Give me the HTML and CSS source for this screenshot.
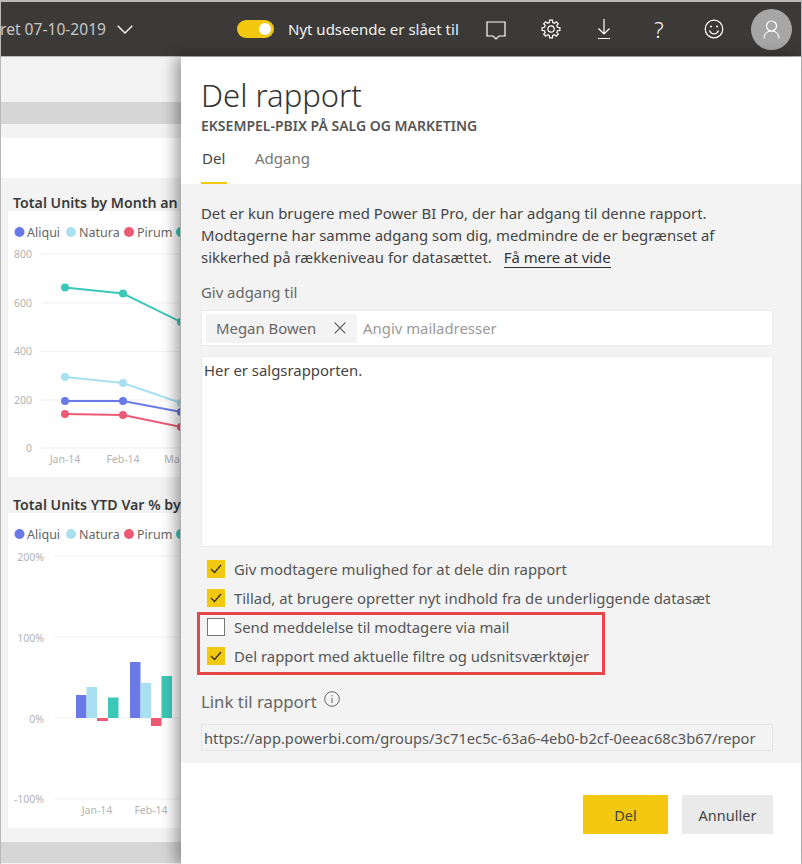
FILE: index.html
```html
<!DOCTYPE html>
<html lang="da">

<head>
    <title>Del rapport</title>
    <meta charset="UTF-8">
    <link rel="stylesheet" href="styles.css">
</head>

<body>
    <header class="topbar">
        <div class="updated">ret 07-10-2019
            <svg class="chevron" width="16" height="9" viewBox="0 0 16 9"><path d="M.7.7 8 8l7.300-7.300"/></svg>
        </div>
        <div class="toggle"><span class="knob"></span></div>
        <span class="toggle-label">Nyt udseende er slået til</span>
        <svg class="icon icon-comment" width="20" height="19" viewBox="0 0 20 19"><path d="M1 1h18v14h-6l-3 3-3-3H1z"/></svg>
        <svg class="icon icon-gear" width="20" height="20" viewBox="0 0 20 20">
            <polygon points="8.27,3.53 8.59,1.11 11.41,1.11 11.73,3.53 13.35,4.2 15.29,2.72 17.28,4.71 15.8,6.65 16.47,8.27 18.89,8.59 18.89,11.41 16.47,11.73 15.8,13.35 17.28,15.29 15.29,17.28 13.35,15.8 11.73,16.47 11.41,18.89 8.59,18.89 8.27,16.47 6.65,15.8 4.71,17.28 2.72,15.29 4.2,13.35 3.53,11.73 1.11,11.41 1.11,8.59 3.53,8.27 4.2,6.65 2.72,4.71 4.71,2.72 6.65,4.2"/>
            <circle cx="10" cy="10" r="3.2"/>
        </svg>
        <svg class="icon icon-download" width="14" height="20" viewBox="0 0 14 20"><path d="M7 0v15M1.500 9.500 7 15l5.500-5.500M1 19.500h12"/></svg>
        <span class="icon-help">?</span>
        <svg class="icon icon-smile" width="20" height="20" viewBox="0 0 20 20">
            <circle cx="10" cy="10" r="8.800"/>
            <path d="M5.500 11.500c1 2.300 2.600 3.400 4.500 3.400s3.500-1.100 4.500-3.400"/>
            <circle class="eye" cx="7" cy="7.500" r="1"/>
            <circle class="eye" cx="13" cy="7.500" r="1"/>
        </svg>
        <div class="avatar">
            <svg class="icon" width="17" height="19" viewBox="0 0 17 19"><circle cx="8.500" cy="6" r="5"/><path d="M1 18.500c0-4.500 3-7.500 7.500-7.500s7.500 3 7.500 7.500"/></svg>
        </div>
    </header>

    <main class="page">
        <div class="dashboard">
            <div class="band-top"></div>
            <div class="band-grey"></div>
            <div class="band-gap"></div>
            <div class="band-white"></div>

            <div class="card card-line">
                <h3 class="card-title">Total Units by Month an</h3>
                <svg class="chart chart-line" width="172" height="266" viewBox="8 211 172 266">
                    <g class="legend">
                        <circle class="blue" cx="19.500" cy="232" r="5"/><text x="27" y="237">Aliqui</text>
                        <circle class="light" cx="71" cy="232" r="5"/><text x="79" y="237">Natura</text>
                        <circle class="red" cx="129" cy="232" r="5"/><text x="137" y="237">Pirum</text>
                        <circle class="teal" cx="181" cy="232" r="5"/>
                    </g>
                    <g class="grid">
                        <path d="M41 254H180M41 303H180M41 351.500H180M41 400H180M41 448H180"/>
                    </g>
                    <g class="axis axis-y">
                        <text x="32" y="258">800</text>
                        <text x="32" y="307">600</text>
                        <text x="32" y="355">400</text>
                        <text x="32" y="404">200</text>
                        <text x="32" y="452">0</text>
                    </g>
                    <g class="axis axis-x">
                        <text x="65" y="463">Jan-14</text>
                        <text x="123" y="463">Feb-14</text>
                        <text x="172" y="463">Ma</text>
                    </g>
                    <polyline class="line teal-line" points="65,287.500 123,293.500 181,322"/>
                    <polyline class="line light-line" points="65,377 123,383 181,403"/>
                    <polyline class="line blue-line" points="65,401 123,401 181,412"/>
                    <polyline class="line red-line" points="65,414 123,415 181,427"/>
                    <circle class="teal" cx="65" cy="287.500" r="4"/><circle class="teal" cx="123" cy="293.500" r="4"/><circle class="teal" cx="181" cy="322" r="4"/>
                    <circle class="light" cx="65" cy="377" r="4"/><circle class="light" cx="123" cy="383" r="4"/><circle class="light" cx="181" cy="403" r="4"/>
                    <circle class="blue" cx="65" cy="401" r="4"/><circle class="blue" cx="123" cy="401" r="4"/><circle class="blue" cx="181" cy="412" r="4"/>
                    <circle class="red" cx="65" cy="414" r="4"/><circle class="red" cx="123" cy="415" r="4"/><circle class="red" cx="181" cy="427" r="4"/>
                </svg>
            </div>

            <div class="card card-bars">
                <h3 class="card-title">Total Units YTD Var % by</h3>
                <svg class="chart chart-bars" width="172" height="315" viewBox="8 513 172 315">
                    <g class="legend">
                        <circle class="blue" cx="19.500" cy="534" r="5"/><text x="27" y="539">Aliqui</text>
                        <circle class="light" cx="71" cy="534" r="5"/><text x="79" y="539">Natura</text>
                        <circle class="red" cx="129" cy="534" r="5"/><text x="137" y="539">Pirum</text>
                        <circle class="teal" cx="181" cy="534" r="5"/>
                    </g>
                    <g class="grid">
                        <path d="M54 556H180M54 637H180M54 718H180M54 799H180"/>
                    </g>
                    <g class="axis axis-y">
                        <text x="44" y="561">200%</text>
                        <text x="44" y="642">100%</text>
                        <text x="44" y="723">0%</text>
                        <text x="44" y="803">-100%</text>
                    </g>
                    <g class="axis axis-x">
                        <text x="97" y="814">Jan-14</text>
                        <text x="151" y="814">Feb-14</text>
                    </g>
                    <rect class="blue" x="76" y="695" width="10.500" height="23"/>
                    <rect class="light" x="86.500" y="687" width="10.500" height="31"/>
                    <rect class="red" x="97" y="718" width="11" height="3"/>
                    <rect class="teal" x="108" y="697.500" width="10.500" height="20.500"/>
                    <rect class="blue" x="130" y="662" width="10.500" height="56"/>
                    <rect class="light" x="140.500" y="683" width="10.500" height="35"/>
                    <rect class="red" x="151" y="718" width="10.500" height="8"/>
                    <rect class="teal" x="161.500" y="676" width="10.500" height="42"/>
                </svg>
            </div>
            <div class="band-bottom"></div>
        </div>

        <section class="panel">
            <div class="panel-head">
                <h1>Del rapport</h1>
                <div class="subtitle">EKSEMPEL-PBIX PÅ SALG OG MARKETING</div>
                <nav class="tabs">
                    <a class="tab tab-active">Del</a>
                    <a class="tab">Adgang</a>
                </nav>
            </div>

            <div class="panel-body">
                <p class="intro">Det er kun brugere med Power BI Pro, der har adgang til denne rapport.<br>
                    Modtagerne har samme adgang som dig, medmindre de er begrænset af<br>
                    sikkerhed på rækkeniveau for datasættet. <a class="more">Få mere at vide</a></p>

                <div class="label">Giv adgang til</div>
                <div class="recipients">
                    <span class="chip">Megan Bowen
                        <svg class="chip-x" width="12" height="12" viewBox="0 0 12 12"><path d="M.7.7l10.600 10.600M11.300.7.700 11.300"/></svg>
                    </span>
                    <span class="placeholder">Angiv mailadresser</span>
                </div>
                <div class="message">Her er salgsrapporten.</div>

                <div class="options">
                    <div class="option"><span class="check check-on"><svg width="12" height="10" viewBox="0 0 12 10"><path d="M1 5l3.500 3.500L11 1"/></svg></span>Giv modtagere mulighed for at dele din rapport</div>
                    <div class="option"><span class="check check-on"><svg width="12" height="10" viewBox="0 0 12 10"><path d="M1 5l3.500 3.500L11 1"/></svg></span>Tillad, at brugere opretter nyt indhold fra de underliggende datasæt</div>
                    <div class="highlight">
                        <div class="option"><span class="check"></span>Send meddelelse til modtagere via mail</div>
                        <div class="option"><span class="check check-on"><svg width="12" height="10" viewBox="0 0 12 10"><path d="M1 5l3.500 3.500L11 1"/></svg></span>Del rapport med aktuelle filtre og udsnitsværktøjer</div>
                    </div>
                </div>

                <div class="link-label">Link til rapport
                    <svg class="info" width="16" height="16" viewBox="0 0 16 16"><circle cx="8" cy="8" r="7.300"/><path d="M8 7v5M8 4v1.400"/></svg>
                </div>
                <div class="link-box"><span class="link-text">https://app.powerbi.com/groups/3c71ec5c-63a6-4eb0-b2cf-0eeac68c3b67/repor</span></div>
            </div>

            <div class="panel-foot">
                <button class="btn btn-primary">Del</button>
                <button class="btn">Annuller</button>
            </div>
        </section>
    </main>
</body>

</html>
```

FILE: styles.css
```css
* {
    box-sizing: border-box;
}

html,
body {
    height: 100%;
}

body {
    margin: 0;
    padding: 2px 1px 1px;
    background: #b9b9b9;
    color: #555;
    font-family: "Noto Sans", "Open Sans", sans-serif;
    overflow: hidden;
}

/* top bar */
.topbar {
    display: flex;
    align-items: center;
    height: 54px;
    background: #3b3a39;
    color: #fff;
}

.updated {
    display: flex;
    align-items: center;
    width: 131px;
    margin-left: -1px;
    color: #c8c6c4;
    font-size: 15.600px;
    white-space: nowrap;
}

.chevron {
    flex: none;
    margin-left: 11px;
    fill: none;
    stroke: #fff;
    stroke-width: 1.300;
}

.toggle {
    display: flex;
    align-items: center;
    justify-content: flex-end;
    flex: none;
    width: 37px;
    height: 18px;
    margin-left: 106px;
    padding-right: 3px;
    border-radius: 9px;
    background: #f2c811;
}

.knob {
    width: 12px;
    height: 12px;
    border-radius: 50%;
    background: #fff;
}

.toggle-label {
    flex: none;
    width: 198px;
    margin-left: 14px;
    color: #f3f2f1;
    font-size: 15px;
    white-space: nowrap;
}

.icon {
    fill: none;
    stroke: #fff;
    stroke-width: 1.200;
    flex: none;
}

.icon .eye {
    fill: #fff;
    stroke: none;
}

.icon-comment {
    margin-top: 2px;
}

.icon-gear {
    margin-left: 35px;
}

.icon-download {
    margin-left: 36px;
}

.icon-help {
    width: 14px;
    margin-left: 41px;
    color: #fff;
    font-size: 22px;
    font-weight: 300;
    line-height: 1;
    text-align: center;
}

.icon-smile {
    margin-left: 38px;
}

.avatar {
    display: flex;
    align-items: center;
    justify-content: center;
    flex: none;
    width: 41px;
    height: 41px;
    margin-left: 27px;
    border-radius: 50%;
    background: #a6a6a6;
}

/* dashboard behind the panel */
.page {
    display: flex;
    height: 807px;
    margin-top: 1px;
    background: #fff;
}

.dashboard {
    flex: 0 0 180px;
    overflow: hidden;
    background: #f3f3f3;
}

.band-top {
    height: 45px;
}

.band-grey {
    height: 22px;
    background: #d6d6d6;
}

.band-gap {
    height: 14px;
}

.band-white {
    height: 40px;
    background: #fff;
}

.card {
    margin-left: 7px;
    width: 173px;
}

.card-line {
    margin-top: 12px;
}

.card-bars {
    margin-top: 15px;
}

.card-title {
    height: 21px;
    margin: 0;
    padding-left: 5px;
    color: #3a3a3a;
    font-size: 14.200px;
    font-weight: 600;
    line-height: 25px;
    white-space: nowrap;
    overflow: hidden;
}

.chart {
    display: block;
    background: #fff;
}

.legend text {
    fill: #666;
    font-size: 12.500px;
}

.grid path {
    fill: none;
    stroke: #f0f0f0;
}

.axis text {
    fill: #b3b3b3;
    font-size: 10.500px;
}

.axis-y text {
    text-anchor: end;
}

.axis-x text {
    text-anchor: middle;
}

.blue {
    fill: #6b78e8;
}

.light {
    fill: #a8e0f1;
}

.red {
    fill: #ec5a73;
}

.teal {
    fill: #3cc8b8;
}

.line {
    fill: none;
    stroke-width: 2;
}

.blue-line {
    stroke: #6b78e8;
}

.light-line {
    stroke: #a8e0f1;
}

.red-line {
    stroke: #ec5a73;
}

.teal-line {
    stroke: #3cc8b8;
}

.band-bottom {
    height: 21px;
    margin-top: 14px;
    background: #d6d6d6;
}

/* share panel */
.panel {
    flex: 1;
    display: flex;
    flex-direction: column;
    background: #fff;
    box-shadow: -5px 0 14px rgba(0, 0, 0, .38);
}

.panel-head {
    height: 127px;
    padding: 18px 0 0 20px;
}

h1 {
    margin: 0;
    color: #333;
    font-size: 31px;
    font-weight: 300;
    line-height: 40px;
}

.subtitle {
    margin-top: 2px;
    color: #555;
    font-size: 14px;
    font-weight: 600;
    line-height: 18px;
}

.tabs {
    display: flex;
    gap: 28px;
    margin-top: 12px;
    font-size: 15px;
}

.tab {
    height: 37px;
    padding-top: 1px;
    color: #777;
}

.tab-active {
    width: 26px;
    padding-left: 1px;
    border-bottom: 2px solid #f2c811;
    color: #444;
}

.panel-body {
    height: 579px;
    padding: 18px 28px 0 20px;
    background: #f3f3f3;
    font-size: 14.900px;
}

.intro {
    margin: 0;
    color: #444;
    line-height: 22px;
    white-space: nowrap;
}

.more {
    margin-left: 8px;
    color: #333;
    border-bottom: 1px solid #333;
}

.label {
    margin-top: 13px;
    color: #666;
    line-height: 22px;
}

.recipients {
    display: flex;
    align-items: center;
    height: 36px;
    margin-top: 7px;
    padding-left: 4px;
    border: 1px solid #ebebeb;
    background: #fff;
}

.chip {
    display: flex;
    align-items: center;
    justify-content: space-between;
    width: 151px;
    height: 29px;
    padding: 0 11px 0 10px;
    background: #f3f3f3;
    color: #666;
}

.chip-x {
    fill: none;
    stroke: #555;
    stroke-width: 1.100;
}

.placeholder {
    margin-left: 6px;
    color: #999;
}

.message {
    height: 191px;
    margin-top: 10px;
    padding: 3px 2px;
    border: 1px solid #ebebeb;
    background: #fff;
    color: #444;
}

.options {
    margin-top: 7px;
}

.option {
    display: flex;
    align-items: center;
    height: 29px;
    padding-left: 6px;
    color: #555;
    white-space: nowrap;
}

.check {
    display: flex;
    align-items: center;
    justify-content: center;
    flex: none;
    width: 18px;
    height: 18px;
    margin-right: 9px;
    border: 1px solid #777;
    background: #fff;
}

.check-on {
    border: 0;
    background: #f2c811;
}

.check svg {
    fill: none;
    stroke: #333;
    stroke-width: 1.400;
}

.highlight {
    width: 408px;
    height: 63px;
    margin-left: -4px;
    border: 3px solid #e8474a;
    padding: 0 0 0 7px;
}

.highlight .option {
    padding-left: 0;
}

.highlight .option:first-child {
    margin-top: -3px;
}

.link-label {
    display: flex;
    align-items: flex-start;
    gap: 7px;
    margin-top: 15px;
    color: #666;
    font-size: 16.800px;
    line-height: 24px;
}

.info {
    margin-top: 1px;
    fill: none;
    stroke: #666;
}

.link-box {
    height: 27px;
    margin-top: 10px;
    padding: 1px 1px 0 2px;
    border: 1px solid #e6e6e6;
    color: #555;
    font-size: 14.700px;
    line-height: 24px;
}

.link-text {
    display: block;
    white-space: nowrap;
    overflow: hidden;
}

.panel-foot {
    display: flex;
    justify-content: flex-end;
    gap: 14px;
    padding: 32px 28px 0 0;
}

.btn {
    width: 91px;
    height: 39px;
    border: 0;
    background: #eaeaea;
    color: #444;
    font-family: inherit;
    font-size: 14.500px;
}

.btn-primary {
    width: 85px;
    background: #f2c811;
}
```
